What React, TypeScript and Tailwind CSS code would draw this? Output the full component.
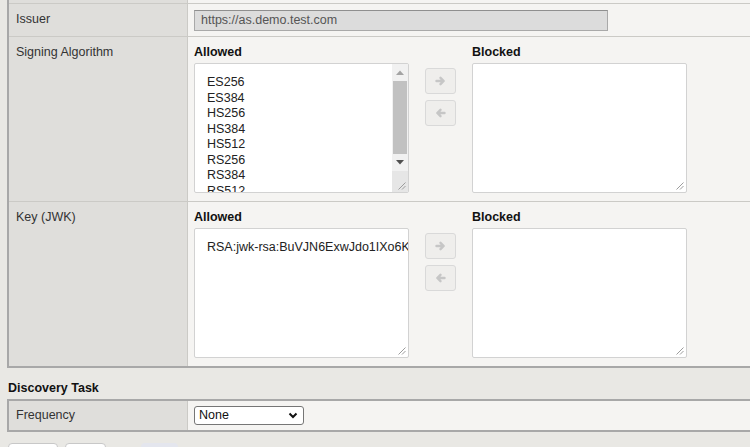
import React from "react";

const algorithms = ["ES256", "ES384", "HS256", "HS384", "HS512", "RS256", "RS384", "RS512"];

const Grip = () => (
  <svg width="9" height="9" viewBox="0 0 9 9" className="absolute bottom-[2px] right-[2px]">
    <path d="M8.5 1.5L1.5 8.5M8.5 5L5 8.5" stroke="#9c9c9c" strokeWidth="1" />
  </svg>
);

const MoveButton = ({ dir }: { dir: "right" | "left" }) => (
  <button className="w-[31px] h-[26px] rounded-[3px] border border-[#d9d9d9] bg-[#efeeec] flex items-center justify-center">
    <svg width="11" height="10" viewBox="0 0 11 10">
      <path
        d={dir === "right" ? "M1.5 5h7M5.5 1.8L8.7 5 5.5 8.2" : "M9.5 5h-7M5.5 1.8L2.3 5l3.2 3.2"}
        stroke="#c6c6c6"
        strokeWidth="2.4"
        fill="none"
        strokeLinecap="round"
        strokeLinejoin="round"
      />
    </svg>
  </button>
);

const ScrollBar = () => (
  <div className="w-[16px] shrink-0 flex flex-col bg-[#f1f1f1]">
    <div className="h-[17px] flex items-center justify-center">
      <svg width="8" height="5" viewBox="0 0 8 5"><path d="M0 5L4 0.5 8 5z" fill="#a3a3a3" /></svg>
    </div>
    <div className="mx-[1px] h-[73px] bg-[#c1c1c1]" />
    <div className="h-[17px] flex items-center justify-center">
      <svg width="8" height="5" viewBox="0 0 8 5"><path d="M0 0L4 4.5 8 0z" fill="#505050" /></svg>
    </div>
    <div className="relative flex-1 bg-[#e6e6e6]">
      <Grip />
    </div>
  </div>
);

const Transfer = ({ allowed, scroll }: { allowed: string[]; scroll?: boolean }) => (
  <div className="flex items-start">
    <div className="w-[215px]">
      <div className="font-bold leading-[14px] text-[#111] mb-[4px]">Allowed</div>
      <div className="relative h-[130px] flex bg-white border border-[#d2d2d2] rounded-[2px] overflow-hidden">
        <div className="flex-1 min-w-0 pl-[12px] pt-[11px] leading-[15.5px] text-[#222] whitespace-nowrap overflow-hidden">
          {allowed.map((a) => (
            <div key={a}>{a}</div>
          ))}
        </div>
        {scroll ? <ScrollBar /> : <Grip />}
      </div>
    </div>
    <div className="mx-[16px] mt-[23px] flex flex-col gap-[6px]">
      <MoveButton dir="right" />
      <MoveButton dir="left" />
    </div>
    <div className="w-[215px]">
      <div className="font-bold leading-[14px] text-[#111] mb-[4px]">Blocked</div>
      <div className="relative h-[130px] bg-white border border-[#d2d2d2] rounded-[2px]">
        <Grip />
      </div>
    </div>
  </div>
);

const Row = ({ label, children, className = "" }: { label: string; children: React.ReactNode; className?: string }) => (
  <div className="flex border-t border-[#cbcac6]">
    <div className="w-[179px] shrink-0 bg-[#dfdedb] border-r border-[#cbcac6] pl-[7px] pt-[8px] leading-[14px] text-[#333]">
      {label}
    </div>
    <div className={`flex-1 bg-[#f5f4f2] pl-[6px] ${className}`}>{children}</div>
  </div>
);

export default function App() {
  return (
    <div className="w-[750px] h-[447px] overflow-hidden bg-[#e9e8e4] font-['Liberation_Sans',Arial,sans-serif] text-[12.5px] text-[#333]">
      {/* Provider settings */}
      <div className="ml-[7px] border-l-2 border-b-2 border-[#a8a8a8]">
        <div className="flex h-[3px]">
          <div className="w-[179px] shrink-0 bg-[#dfdedb] border-r border-[#cbcac6]" />
          <div className="flex-1 bg-[#f5f4f2]" />
        </div>
        <Row label="Issuer" className="pt-[6px] pb-[5px]">
          <div className="w-[414px] h-[21px] bg-[#dcdcdc] border border-[#a9a9a9] border-t-[#8f8f8f] pl-[6px] leading-[19px] text-[#555]">
            https://as.demo.test.com
          </div>
        </Row>
        <Row label="Signing Algorithm" className="pt-[8px] pb-[8px]">
          <Transfer allowed={algorithms} scroll />
        </Row>
        <Row label="Key (JWK)" className="pt-[8px] pb-[8px]">
          <Transfer allowed={["RSA:jwk-rsa:BuVJN6ExwJdo1IXo6KcTqHpA"]} />
        </Row>
      </div>

      {/* Discovery task */}
      <div className="pl-[8px] pt-[13px] h-[31px] font-bold leading-[14px] text-[#111]">Discovery Task</div>
      <div className="ml-[7px] border-l-2 border-y-2 border-[#a8a8a8] flex h-[33px]">
        <div className="w-[179px] shrink-0 bg-[#dfdedb] border-r border-[#cbcac6] pl-[7px] pt-[7px] leading-[14px]">
          Frequency
        </div>
        <div className="flex-1 bg-[#f5f4f2] pl-[6px] pt-[5px]">
          <div className="w-[110px] h-[19px] bg-white border border-[#767676] rounded-[3px] flex items-center justify-between pl-[4px] pr-[5px] text-[#111]">
            <span>None</span>
            <svg width="10" height="7" viewBox="0 0 10 7">
              <path d="M1.5 1.5L5 5l3.5-3.5" stroke="#111" strokeWidth="2" fill="none" />
            </svg>
          </div>
        </div>
      </div>

      {/* Actions */}
      <div className="flex gap-[7px] pl-[8px] mt-[11px]">
        <div className="w-[50px] h-[12px] bg-white border border-[#c8c8c8] rounded-[4px]" />
        <div className="w-[41px] h-[12px] bg-white border border-[#c8c8c8] rounded-[4px]" />
        <div className="ml-[28px] w-[37px] h-[12px] bg-[#e4e6ee] rounded-[4px]" />
      </div>
    </div>
  );
}
